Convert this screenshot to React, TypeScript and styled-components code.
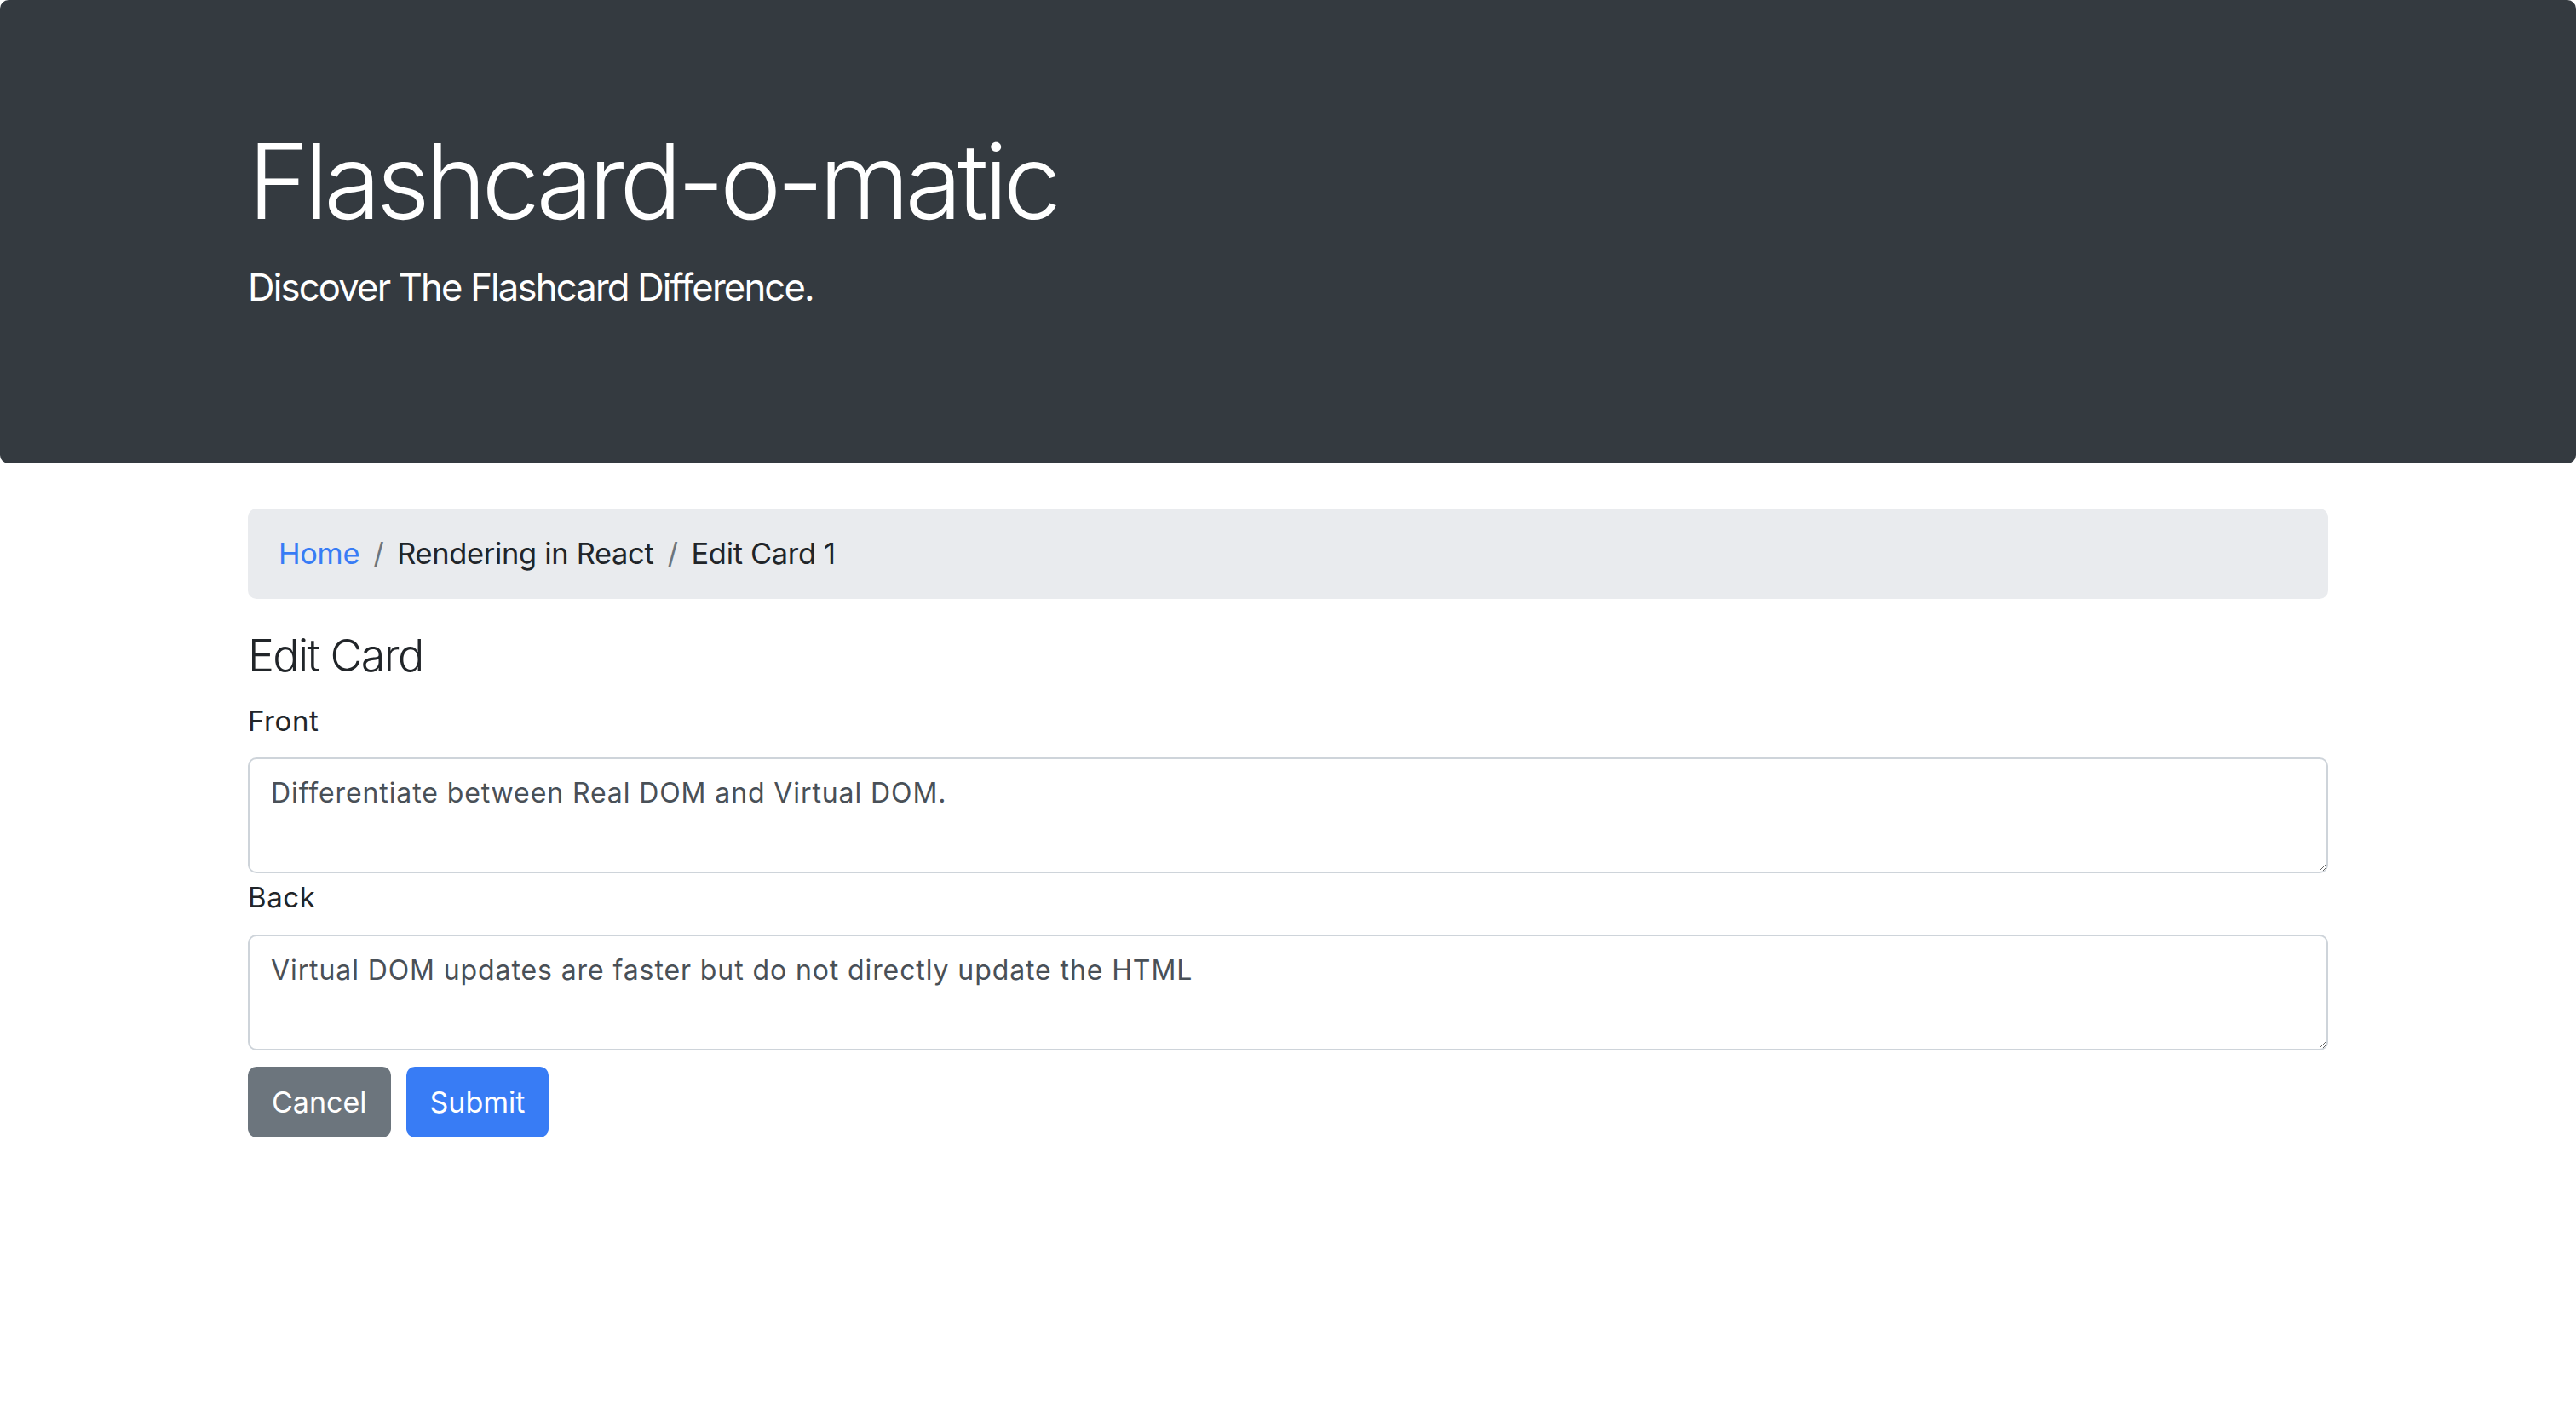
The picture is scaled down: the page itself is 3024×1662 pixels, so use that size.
import React from "react";
import styled, { createGlobalStyle } from "styled-components";

const GlobalStyle = createGlobalStyle`
  html, body {
    margin: 0;
    padding: 0;
    background: #ffffff;
  }
  body {
    font-family: Inter, "Liberation Sans", sans-serif;
    color: #212529;
    -webkit-font-smoothing: antialiased;
  }
  * { box-sizing: border-box; }
`;

const Page = styled.div`
  display: flex;
  flex-direction: column;
  min-height: 1662px;
`;

const Jumbotron = styled.header`
  background: #343a40;
  color: #ffffff;
  border-radius: 10px;
  height: 544px;
  padding-top: 140px;
`;

const Container = styled.div`
  width: 2442px;
  margin: 0 auto;
`;

const Title = styled.h1`
  margin: 0;
  font-size: 122px;
  font-weight: 300;
  line-height: 1.2;
  letter-spacing: -5.5px;
`;

const Lead = styled.p`
  margin: 19px 0 0;
  font-size: 43.6px;
  font-weight: 400;
  line-height: 1.5;
  letter-spacing: -1.8px;
`;

const Breadcrumb = styled.nav`
  margin-top: 53px;
  height: 106px;
  padding: 27px 36px;
  background: #e9ebee;
  border-radius: 10px;
  display: flex;
  align-items: flex-start;
  font-size: 34.4px;
  line-height: 1.5;
  letter-spacing: -0.3px;
`;

const Crumb = styled.span<{ $link?: boolean }>`
  color: ${(p) => (p.$link ? "#387cf5" : "#212529")};
`;

const Sep = styled.span`
  color: #6c757d;
  padding: 0 16px;
`;

const Heading = styled.h3`
  margin: 36px 0 0;
  font-size: 52px;
  font-weight: 300;
  line-height: 1.2;
  letter-spacing: -1.6px;
`;

const Form = styled.form`
  display: flex;
  flex-direction: column;
`;

const Label = styled.label<{ $top: number }>`
  margin-top: ${(p) => p.$top}px;
  font-size: 33px;
  line-height: 1.5;
  letter-spacing: 0.6px;
  color: #212529;
`;

const TextArea = styled.textarea<{ $top: number }>`
  margin-top: ${(p) => p.$top}px;
  width: 100%;
  height: 136px;
  padding: 16px 25px;
  border: 2px solid #ced4da;
  border-radius: 10px;
  font-family: Inter, "Liberation Sans", sans-serif;
  font-size: 32px;
  line-height: 1.5;
  letter-spacing: 0.9px;
  color: #495057;
  background: #fff;
  outline: none;
`;

const Actions = styled.div`
  margin-top: 19px;
  display: flex;
  gap: 18px;
`;

const Button = styled.button<{ $variant: "secondary" | "primary" }>`
  height: 83px;
  padding: 14px 28px;
  border: none;
  border-radius: 10px;
  font-family: Inter, "Liberation Sans", sans-serif;
  font-size: 34px;
  line-height: 1.6;
  color: #fff;
  background: ${(p) => (p.$variant === "primary" ? "#387cf5" : "#6c757d")};
`;

export default function App() {
  return (
    <Page>
      <GlobalStyle />
      <Jumbotron>
        <Container>
          <Title>Flashcard-o-matic</Title>
          <Lead>Discover The Flashcard Difference.</Lead>
        </Container>
      </Jumbotron>
      <Container>
        <Breadcrumb>
          <Crumb $link>Home</Crumb>
          <Sep>/</Sep>
          <Crumb>Rendering in React</Crumb>
          <Sep>/</Sep>
          <Crumb>Edit Card 1</Crumb>
        </Breadcrumb>
        <Heading>Edit Card</Heading>
        <Form>
          <Label $top={21} htmlFor="front">Front</Label>
          <TextArea
            $top={17}
            id="front"
            defaultValue="Differentiate between Real DOM and Virtual DOM."
          />
          <Label $top={4} htmlFor="back">Back</Label>
          <TextArea
            $top={19}
            id="back"
            defaultValue="Virtual DOM updates are faster but do not directly update the HTML"
          />
          <Actions>
            <Button type="button" $variant="secondary">Cancel</Button>
            <Button type="submit" $variant="primary">Submit</Button>
          </Actions>
        </Form>
      </Container>
    </Page>
  );
}
